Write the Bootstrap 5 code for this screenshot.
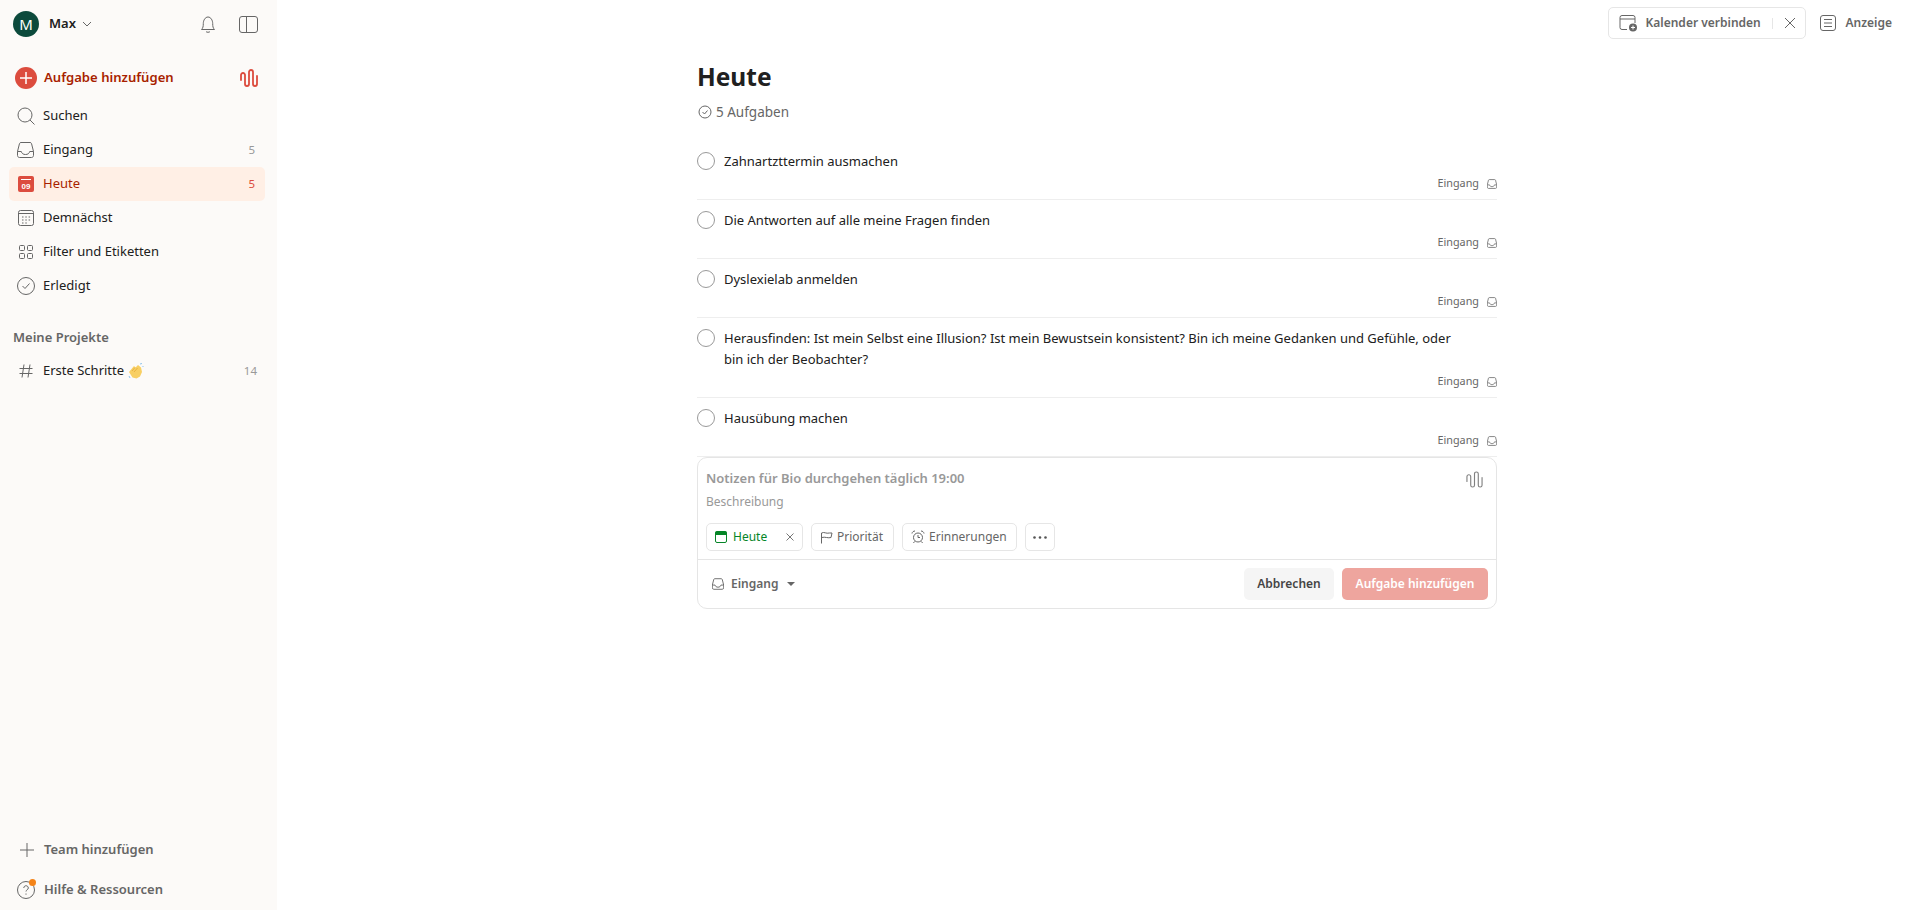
<!DOCTYPE html>
<html lang="de">
<head>
    <meta charset="UTF-8">
    <meta name="viewport" content="width=device-width, initial-scale=1.0">
    <title>Heute</title>
    <link href="https://cdn.jsdelivr.net/npm/bootstrap@5.3.0/dist/css/bootstrap.min.css" rel="stylesheet">
    <style>
        html, body { height: 100%; overflow: hidden; }
        body { font-family: "Noto Sans", "Open Sans", sans-serif; font-size: 13px; color: #202020; background: #fff; }
        svg { display: block; flex-shrink: 0; }

        /* Sidebar */
        .side-panel { width: 277px; height: 910px; background: #fcfaf8; flex-shrink: 0; padding: 0 12px 0 9px; }
        .side-head { height: 48px; padding: 0 7px 0 4px; }
        .avatar { width: 26px; height: 26px; border-radius: 50%; background: #0c4a3c; color: #fff; font-size: 15px; line-height: 26px; text-align: center; }
        .user-name { font-weight: 600; font-size: 13px; margin-left: 10px; margin-right: 6px; }
        .bell-ico { margin-right: 23px; }
        .side-add { height: 34px; margin-top: 13px; margin-bottom: 4px; padding: 0 7px 0 6px; color: #a81f00; font-weight: 600; font-size: 13.1px; }
        .add-circle { width: 22px; height: 22px; border-radius: 50%; background: #dc4c3e; margin-right: 7px; }
        .side-link { height: 34px; padding: 0 10px 0 8px; border-radius: 5px; color: #202020; font-size: 13px; }
        .side-link .link-ico { width: 18px; margin-right: 8px; }
        .side-link.is-active { background: #ffefe5; color: #a81f00; }
        .side-count { margin-left: auto; font-size: 11.5px; color: #999; }
        .side-count.is-wide { margin-right: -2px; }
        .is-active .side-count { color: #dc4c3e; }
        .side-title { font-weight: 600; color: #666; font-size: 13px; padding-left: 4px; margin-top: 17px; height: 34px; line-height: 34px; }
        .side-foot { font-weight: 600; color: #666; font-size: 13px; }
        .foot-team { height: 34px; padding-left: 11px; }
        .foot-team svg { margin-right: 10px; }
        .foot-help { height: 34px; margin-top: 6px; margin-bottom: 3px; padding-left: 8px; }
        .help-ico { width: 19px; height: 18px; margin-right: 8px; }
        .help-dot { position: absolute; top: -2px; right: 0; width: 7px; height: 7px; background: #f48318; border-radius: 50%; }

        /* Top right */
        .main-area { min-width: 0; }
        .top-bar { height: 48px; padding: 7px 22px 0 0; }
        .cal-box { height: 32px; border: 1px solid #e6e6e6; border-radius: 5px; padding: 0 9px 0 10px; font-weight: 600; font-size: 12px; color: #666; width: 198px; }
        .cal-sep { width: 1px; height: 11px; background: #e6e6e6; margin: 0 11px 0 auto; }
        .view-btn { font-weight: 600; font-size: 12px; color: #666; margin-left: 14px; height: 32px; }
        .view-btn svg { margin-right: 10px; }

        /* Task list */
        .day-col { width: 800px; margin-left: 420px; }
        .day-title { font-size: 24.5px; font-weight: 700; line-height: 36px; margin: 11px 0 0; color: #202020; }
        .day-sub { color: #666; font-size: 13.5px; margin-top: 7px; height: 20px; margin-bottom: 19px; }
        .task-row { border-bottom: 1px solid #eee; padding: 10px 0 0; }
        .task-check { width: 18px; height: 18px; border: 1px solid #999; border-radius: 50%; margin-top: 1px; margin-right: 9px; flex-shrink: 0; }
        .task-text { font-size: 13px; line-height: 21px; max-width: 740px; }
        .task-meta { color: #666; font-size: 10.8px; height: 27px; gap: 8px; padding-bottom: 4px; }

        /* Add form */
        .task-form { border: 1px solid #e5e5e5; border-radius: 10px; height: 152px; }
        .form-top { height: 102px; padding: 8px; border-bottom: 1px solid #e5e5e5; position: relative; }
        .form-name { font-weight: 600; font-size: 13px; color: #999; line-height: 24px; }
        .form-desc { font-size: 12px; color: #999; line-height: 18px; margin-top: 3px; }
        .form-wave { position: absolute; top: 12px; right: 13px; }
        .form-chips { margin-top: 12px; gap: 8px; }
        .chip-btn { height: 28px; border: 1px solid #e6e6e6; border-radius: 5px; padding: 0 10px 0 8px; font-size: 12px; color: #666; gap: 4px; background: #fff; }
        .chip-btn.is-today { color: #058527; width: 97px; gap: 6px; padding-right: 8px; }
        .chip-btn.is-alarm { padding-right: 9px; }
        .chip-btn.is-more { width: 30px; padding: 0; }
        .chip-close { margin-left: auto; }
        .form-bottom { padding: 8px; height: 48px; }
        .project-pick { font-weight: 600; font-size: 12px; color: #666; padding-left: 6px; gap: 7px; }
        .pick-caret { width: 0; height: 0; border-left: 4px solid transparent; border-right: 4px solid transparent; border-top: 4px solid #666; margin-left: 2px; }
        .btn-cancel-task { background: #f5f5f5; color: #444; font-weight: 600; font-size: 12px; border: 0; border-radius: 5px; height: 32px; width: 90px; padding: 0; }
        .btn-add-task { background: #eea59e; color: #fff; font-weight: 600; font-size: 12px; border: 0; border-radius: 5px; height: 32px; width: 146px; padding: 0; }
    </style>
</head>
<body>
<svg width="0" height="0" class="position-absolute">
    <symbol id="ico-inbox" viewBox="0 0 17 16"><path d="M4 .5h9c.8 0 1.200.4 1.500 1l2 8v4c0 1-.8 2-2 2h-12c-1.200 0-2-1-2-2v-4l2-8c.3-.6.7-1 1.500-1z"/><path d="M.5 9.500h3.800c.4 2 2 3 4.200 3s3.800-1 4.200-3h3.800"/></symbol>
    <symbol id="ico-wave" viewBox="0 0 18 20"><path d="M1 12V7a2 2 0 0 1 4 0v9a2 2 0 0 0 4 0V4a2 2 0 0 1 4 0v12a2 2 0 0 0 4 0V8"/></symbol>
</svg>
<div class="d-flex">
    <aside class="side-panel d-flex flex-column">
        <div class="side-head d-flex align-items-center">
            <div class="avatar">M</div>
            <span class="user-name">Max</span>
            <svg width="10" height="6" viewBox="0 0 10 6" fill="none" stroke="#666"><path d="M1 1l4 4 4-4"/></svg>
            <svg class="ms-auto bell-ico" width="16" height="20" viewBox="0 0 16 20" fill="none" stroke="#666"><path d="M1.500 15.500c1.500-1.500 1.800-3 1.800-6 0-3 1.800-6.500 4.700-6.500s4.700 3.500 4.700 6.500c0 3 .3 4.500 1.800 6z"/><path d="M6 17.500c.5 1 3.500 1 4 0"/></svg>
            <svg width="19" height="17" viewBox="0 0 19 17" fill="none" stroke="#666"><rect x=".5" y=".5" width="18" height="16" rx="2.500"/><path d="M7.500 .5v16"/></svg>
        </div>
        <div class="side-add d-flex align-items-center">
            <div class="add-circle d-flex align-items-center justify-content-center">
                <svg width="12" height="12" viewBox="0 0 12 12" stroke="#fff" stroke-width="1.500"><path d="M6 0v12M0 6h12"/></svg>
            </div>
            Aufgabe hinzufügen
            <svg class="ms-auto" width="18" height="20" fill="none" stroke="#dc4c3e" stroke-width="1.800" stroke-linecap="round"><use href="#ico-wave"/></svg>
        </div>
        <div class="side-link d-flex align-items-center">
            <span class="link-ico"><svg width="18" height="18" viewBox="0 0 18 18" fill="none" stroke="#666"><circle cx="8" cy="8" r="7"/><path d="M13 13l4.500 4.500"/></svg></span>Suchen
        </div>
        <div class="side-link d-flex align-items-center">
            <span class="link-ico"><svg width="17" height="16" fill="none" stroke="#666"><use href="#ico-inbox"/></svg></span>Eingang<span class="side-count">5</span>
        </div>
        <div class="side-link is-active d-flex align-items-center">
            <span class="link-ico d-flex justify-content-center"><svg width="16" height="16" viewBox="0 0 16 16"><rect width="16" height="16" rx="2" fill="#dc4c3e"/><path d="M3 3.500h10" stroke="#fff"/><text x="8" y="13" font-size="8" font-weight="700" fill="#fff" text-anchor="middle" font-family="Liberation Sans">09</text></svg></span>Heute<span class="side-count">5</span>
        </div>
        <div class="side-link d-flex align-items-center">
            <span class="link-ico d-flex justify-content-center"><svg width="16" height="16" viewBox="0 0 16 16" fill="none" stroke="#666"><rect x=".5" y=".5" width="15" height="15" rx="2"/><path d="M.5 3.500h15"/><path d="M4 7h1.500M7.300 7h1.500M10.600 7h1.500M4 10h1.500M7.300 10h1.500M10.600 10h1.500M4 13h1.500M7.300 13h1.500" stroke-width="1.200"/></svg></span>Demnächst
        </div>
        <div class="side-link d-flex align-items-center">
            <span class="link-ico d-flex justify-content-center"><svg width="16" height="16" viewBox="0 0 16 16" fill="none" stroke="#666"><rect x="1.500" y="1.500" width="5" height="5" rx="1"/><rect x="9.500" y="1.500" width="5" height="5" rx="1"/><rect x="1.500" y="9.500" width="5" height="5" rx="1"/><rect x="9.500" y="9.500" width="5" height="5" rx="1"/></svg></span>Filter und Etiketten
        </div>
        <div class="side-link d-flex align-items-center">
            <span class="link-ico"><svg width="18" height="18" viewBox="0 0 18 18" fill="none" stroke="#666"><circle cx="9" cy="9" r="8.500"/><path d="M5.500 9l2.500 2.500 4.500-5"/></svg></span>Erledigt
        </div>
        <div class="side-title">Meine Projekte</div>
        <div class="side-link d-flex align-items-center">
            <span class="link-ico d-flex justify-content-center"><svg width="14" height="14" viewBox="0 0 14 14" fill="none" stroke="#666"><path d="M5 .5L3 13.500M11 .5L9 13.500M.5 4.500h13M.5 9.500h13"/></svg></span>Erste Schritte
            <svg class="ms-1" width="16" height="16" viewBox="0 0 16 16"><path d="M1 9l5-6 1.500 1.500L10 2l3 2.500 1 4.500-2 4.500-3.500 2-4-1z" fill="#f8cf63"/><path d="M6 9l3.500-4M4 8l3-3.500" stroke="#e3a93a" fill="none" stroke-width=".8"/><path d="M12 1l2-.5M14.500 3l1 1M1 13l1 2" stroke="#8ec4ec" fill="none"/></svg>
            <span class="side-count is-wide">14</span>
        </div>
        <div class="mt-auto side-foot">
            <div class="foot-team d-flex align-items-center">
                <svg width="14" height="14" viewBox="0 0 14 14" stroke="#666"><path d="M7 0v14M0 7h14"/></svg>Team hinzufügen
            </div>
            <div class="foot-help d-flex align-items-center">
                <span class="help-ico position-relative">
                    <svg width="18" height="18" viewBox="0 0 18 18" fill="none" stroke="#666"><circle cx="9" cy="9" r="8.500"/><path d="M6.800 7c0-3 4.500-3 4.500 0 0 1.800-2.300 1.800-2.300 3.500M9 12.500v1.200"/></svg>
                    <span class="help-dot"></span>
                </span>Hilfe &amp; Ressourcen
            </div>
        </div>
    </aside>

    <main class="main-area flex-grow-1">
        <div class="top-bar d-flex justify-content-end">
            <div class="cal-box d-flex align-items-center">
                <svg class="me-2" width="19" height="18" viewBox="0 0 19 18" fill="none" stroke="#666"><path d="M8 15.500H3a2 2 0 0 1-2-2v-10a2 2 0 0 1 2-2h11a2 2 0 0 1 2 2V9"/><path d="M1 5h15"/><circle cx="14" cy="13.500" r="4" fill="#666" stroke="none"/><path d="M12 13.500h4M14 11.500v4" stroke="#fff"/></svg>
                Kalender verbinden
                <span class="cal-sep"></span>
                <svg width="12" height="12" viewBox="0 0 12 12" stroke="#666"><path d="M1 1l10 10M11 1L1 11"/></svg>
            </div>
            <div class="view-btn d-flex align-items-center">
                <svg width="16" height="16" viewBox="0 0 16 16" fill="none" stroke="#666"><rect x=".5" y=".5" width="15" height="15" rx="2.500"/><path d="M4 4.500h8M4 8h8M4 11.500h8"/></svg>
                Anzeige
            </div>
        </div>

        <div class="day-col">
            <h1 class="day-title">Heute</h1>
            <div class="day-sub d-flex align-items-center">
                <svg class="me-1" width="14" height="14" viewBox="0 0 14 14" fill="none" stroke="#666" style="margin-left:1px"><circle cx="7" cy="7" r="6"/><path d="M4.500 7l2 2 3-3.500"/></svg>
                5 Aufgaben
            </div>

            <div class="task-row">
                <div class="d-flex"><div class="task-check"></div><div class="task-text">Zahnartzttermin ausmachen</div></div>
                <div class="task-meta d-flex justify-content-end align-items-center">Eingang <svg width="10" height="10" fill="none" stroke="#777" stroke-width="1.500"><use href="#ico-inbox"/></svg></div>
            </div>
            <div class="task-row">
                <div class="d-flex"><div class="task-check"></div><div class="task-text">Die Antworten auf alle meine Fragen finden</div></div>
                <div class="task-meta d-flex justify-content-end align-items-center">Eingang <svg width="10" height="10" fill="none" stroke="#777" stroke-width="1.500"><use href="#ico-inbox"/></svg></div>
            </div>
            <div class="task-row">
                <div class="d-flex"><div class="task-check"></div><div class="task-text">Dyslexielab anmelden</div></div>
                <div class="task-meta d-flex justify-content-end align-items-center">Eingang <svg width="10" height="10" fill="none" stroke="#777" stroke-width="1.500"><use href="#ico-inbox"/></svg></div>
            </div>
            <div class="task-row">
                <div class="d-flex"><div class="task-check"></div><div class="task-text">Herausfinden: Ist mein Selbst eine Illusion? Ist mein Bewustsein konsistent? Bin ich meine Gedanken und Gefühle, oder bin ich der Beobachter?</div></div>
                <div class="task-meta d-flex justify-content-end align-items-center">Eingang <svg width="10" height="10" fill="none" stroke="#777" stroke-width="1.500"><use href="#ico-inbox"/></svg></div>
            </div>
            <div class="task-row">
                <div class="d-flex"><div class="task-check"></div><div class="task-text">Hausübung machen</div></div>
                <div class="task-meta d-flex justify-content-end align-items-center">Eingang <svg width="10" height="10" fill="none" stroke="#777" stroke-width="1.500"><use href="#ico-inbox"/></svg></div>
            </div>

            <div class="task-form">
                <div class="form-top">
                    <div class="form-name">Notizen für Bio durchgehen täglich 19:00</div>
                    <div class="form-desc">Beschreibung</div>
                    <svg class="form-wave" width="17" height="19" fill="none" stroke="#808080" stroke-width="1.200" stroke-linecap="round"><use href="#ico-wave"/></svg>
                    <div class="form-chips d-flex">
                        <div class="chip-btn is-today d-flex align-items-center">
                            <svg width="12" height="12" viewBox="0 0 12 12"><rect x=".5" y=".5" width="11" height="11" rx="1.500" fill="none" stroke="#058527"/><rect x=".5" y=".5" width="11" height="3.500" fill="#058527"/></svg>
                            <span>Heute</span>
                            <svg class="chip-close" width="8" height="8" viewBox="0 0 8 8" stroke="#777"><path d="M.5 .5l7 7M7.500 .5l-7 7"/></svg>
                        </div>
                        <div class="chip-btn d-flex align-items-center">
                            <svg width="13" height="13" viewBox="0 0 13 13" fill="none" stroke="#666"><path d="M1.500 12.500V2c3-1.500 4.500 1 8 0h2.500l-1 4.500c-3 1-5.500-1-9.500 0"/></svg>Priorität
                        </div>
                        <div class="chip-btn is-alarm d-flex align-items-center">
                            <svg width="14" height="14" viewBox="0 0 14 14" fill="none" stroke="#666"><circle cx="7" cy="7.500" r="4.500"/><path d="M7 5v2.500h2M1 3.500c.2-1.500 1.500-2.500 3-2.500M13 3.500c-.2-1.500-1.500-2.500-3-2.500M3.500 11.500l-1 1.500M10.500 11.500l1 1.500"/></svg>Erinnerungen
                        </div>
                        <div class="chip-btn is-more d-flex align-items-center justify-content-center">
                            <svg width="14" height="3" viewBox="0 0 14 3" fill="#555"><circle cx="1.500" cy="1.500" r="1.300"/><circle cx="7" cy="1.500" r="1.300"/><circle cx="12.500" cy="1.500" r="1.300"/></svg>
                        </div>
                    </div>
                </div>
                <div class="form-bottom d-flex align-items-center">
                    <div class="project-pick d-flex align-items-center">
                        <svg width="12" height="12" fill="none" stroke="#666" stroke-width="1.300"><use href="#ico-inbox"/></svg>
                        <span>Eingang</span>
                        <span class="pick-caret"></span>
                    </div>
                    <div class="ms-auto d-flex gap-2">
                        <button class="btn btn-cancel-task">Abbrechen</button>
                        <button class="btn btn-add-task">Aufgabe hinzufügen</button>
                    </div>
                </div>
            </div>
        </div>
    </main>
</div>
</body>
</html>
